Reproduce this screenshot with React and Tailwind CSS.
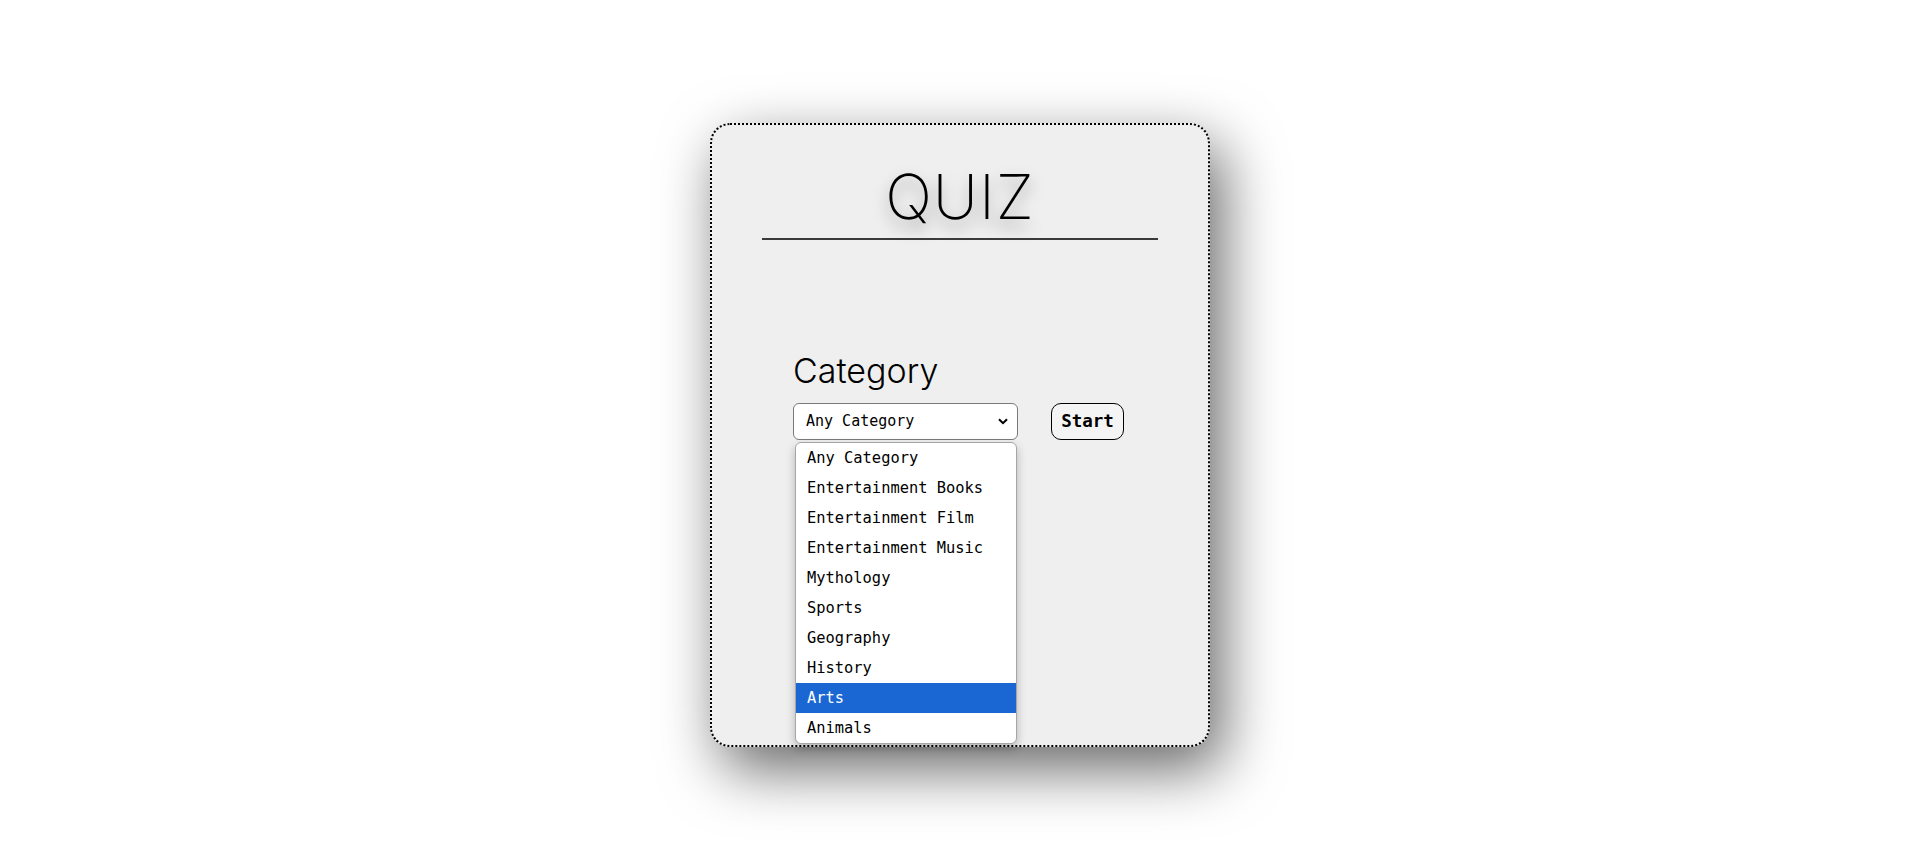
import React from "react";

const items = [
  "Any Category",
  "Entertainment Books",
  "Entertainment Film",
  "Entertainment Music",
  "Mythology",
  "Sports",
  "Geography",
  "History",
  "Arts",
  "Animals",
];

export default function App() {
  return (
    <div className="min-h-screen w-full bg-white flex justify-center pt-[123px] pl-[5px]">
      <div className="w-[500px] h-[624px] rounded-[20px] border-2 border-dotted border-black bg-[#efefef] shadow-[12px_22px_60px_rgba(0,0,0,0.6)] flex flex-col items-center">
        <h1
          className="mt-[41px] text-[62px] leading-none font-extralight text-black tracking-[1px] [text-shadow:0_8px_16px_rgba(0,0,0,0.4)]"
          style={{ fontFamily: "Inter, 'Noto Sans', sans-serif" }}
        >
          QUIZ
        </h1>
        <div className="mt-[10px] w-[396px] h-[2px] bg-[#3a3a3a]" />
        <div className="self-stretch pl-[81px] mt-[114px]">
          <div
            className="text-[34px] leading-none font-light text-black"
            style={{ fontFamily: "Inter, 'Noto Sans', sans-serif" }}
          >
            Category
          </div>
          <div className="mt-[15px] flex items-center gap-[33px]">
            <div className="relative">
              <div
                className="w-[225px] h-[37px] rounded-[6px] border border-[#7a7a7a] bg-white flex items-center justify-between pl-[12px] pr-[8px] text-[15px] text-black"
                style={{ fontFamily: "'DejaVu Sans Mono', 'Liberation Mono', monospace" }}
              >
                <span>Any Category</span>
                <svg width="10" height="7" viewBox="0 0 10 7" className="mr-[1px]">
                  <path d="M1 1.2 L5 5.2 L9 1.2" fill="none" stroke="black" strokeWidth="2" />
                </svg>
              </div>
              <div
                className="absolute left-[2px] top-[39px] w-[222px] rounded-[6px] border border-[#a6a6a6] bg-white shadow-[0_4px_10px_rgba(0,0,0,0.25)] overflow-hidden z-10"
                style={{ fontFamily: "'DejaVu Sans Mono', 'Liberation Mono', monospace" }}
              >
                {items.map((it) => (
                  <div
                    key={it}
                    className={
                      it === "Arts"
                        ? "h-[30px] flex items-center pl-[11px] pt-[2px] text-[15.4px] bg-[#1a67d4] text-white"
                        : "h-[30px] flex items-center pl-[11px] pt-[2px] text-[15.4px] text-black"
                    }
                  >
                    {it}
                  </div>
                ))}
              </div>
            </div>
            <button
              className="w-[73px] h-[37px] rounded-[10px] border border-black bg-[#f4f4f4] text-[17.5px] font-bold text-black -mt-[1px] pt-[1px]"
              style={{ fontFamily: "'DejaVu Sans Mono', 'Liberation Mono', monospace" }}
            >
              Start
            </button>
          </div>
        </div>
      </div>
    </div>
  );
}
